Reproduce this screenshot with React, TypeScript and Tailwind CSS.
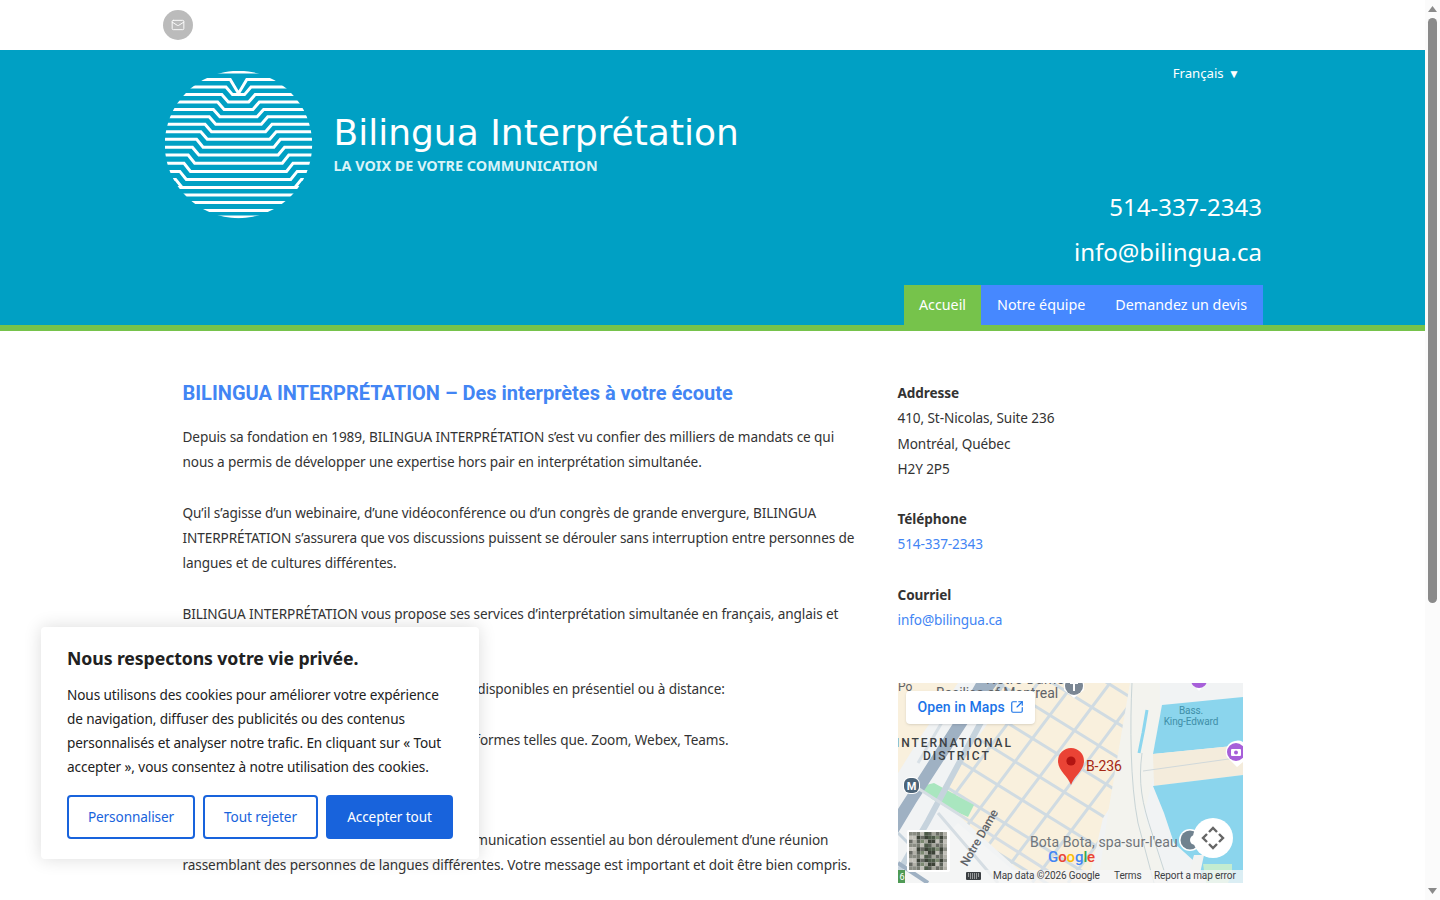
import { Mail, SquareArrowOutUpRight } from 'lucide-react';

// logo: stacked lines that step inward under a chevron
const levels = [72, 79.4, 87, 94.6, 102, 109.4, 116.8, 124.2, 131.7, 139.2, 147.2, 155, 163.2, 171.4, 179.4, 187.4, 195, 202.6, 210.4, 217];
const cx = 238.5;

function logoPath(k: number) {
  const y = levels[k];
  if (k === 0 || k > 14) return `M160 ${y}H320`;
  const off = 8.3 + (k - 1) * 4.2;
  if (k === 1) {
    return `M160 ${y}H${cx - off}L${cx} ${y + 14}L${cx + off} ${y}H320`;
  }
  const inner = off - 6.5;
  const y2 = levels[k + 1];
  return `M160 ${y}H${cx - off}L${cx - inner} ${y2}H${cx + inner}L${cx + off} ${y}H320`;
}

function Logo() {
  return (
    <svg width="148" height="148" viewBox="165 71 148 148" className="shrink-0">
      <clipPath id="logo-clip">
        <circle cx={cx} cy="144.5" r="73.7" />
      </clipPath>
      <g clipPath="url(#logo-clip)" fill="none" stroke="#fff" strokeWidth="3">
        {levels.map((_, k) => (
          <path key={k} d={logoPath(k)} />
        ))}
      </g>
    </svg>
  );
}

const roadsA = [-130, -96, -62, -28, 6, 40, 74, 108];
const roadsB = [100, 136, 172, 208, 244, 280, 316];
const thumbColors = ['#8b8d84', '#5c6158', '#a5a59b', '#c2c0b8', '#777a70', '#4d5a48', '#6a6c65', '#b2b1a8', '#3c4237', '#7d8a72'];
const thumbCells = Array.from({ length: 100 }, (_, i) => ({
  x: (i % 10) * 3.8,
  y: Math.floor(i / 10) * 3.8,
  fill: thumbColors[(i * i * 7 + i * 3 + Math.floor(i / 3)) % 10],
}));

function GoogleMap() {
  return (
    <div className="relative w-[345px] h-[200px] overflow-hidden bg-[#f1f3f4]">
      <svg width="345" height="200" viewBox="0 0 345 200" className="block">
        <clipPath id="tan-clip">
          <path d="M90 0H232V95L205 135L190 200H135L60 132L42 108L90 40Z" />
        </clipPath>
        <path d="M0 0H60L25 50L0 90Z" fill="#f9f0dd" />
        <path d="M90 0H232V95L205 135L190 200H135L60 132L42 108L90 40Z" fill="#f9f0dd" />
        <path d="M0 200L60 140L130 200Z" fill="#f4f5f5" />
        <g stroke="#d0dbe2" strokeWidth="3" fill="none" clipPath="url(#tan-clip)">
          {roadsA.map((c) => (
            <path key={c} d={`M0 ${c}L345 ${c + 214}`} />
          ))}
          {roadsB.map((d) => (
            <path key={d} d={`M${d + 40} 0L${d - 110} 200`} />
          ))}
        </g>
        <path d="M20 104L36 100L76 122L70 134L48 124L34 116Z" fill="#a9e6bf" />
        <path d="M78 0L54 42L0 126V150L18 120L70 40L100 0Z" fill="#9fb1c3" />
        <path d="M104 0L30 138L0 190" stroke="#c6d3dd" strokeWidth="6" fill="none" />
        <path d="M60 12L20 80" stroke="#d8e0e6" strokeWidth="3" fill="none" />
        <path d="M0 150L30 180" stroke="#c6d3dd" strokeWidth="3" fill="none" />
        <path d="M0 180L30 200" stroke="#9fb1c3" strokeWidth="4" fill="none" />
        <path d="M18 104L150 188M40 130L100 200" stroke="#d5dde3" strokeWidth="3" fill="none" />
        <path d="M232 0H262V70L246 130L270 200H200L210 130Z" fill="#f3f3ee" />
        <path d="M234 0C232 40 232 100 240 140L256 200M244 70C240 100 244 120 254 150L270 200" stroke="#c8d4d6" strokeWidth="1" fill="none" />
        <path d="M249 27L246 45L241 70L245 50Z" stroke="#8cd6ee" strokeWidth="3" fill="#8cd6ee" />
        <path d="M264 22L345 14V62L255 71Z" fill="#8bd5ed" />
        <path d="M255 71L345 62V92L256 103Z" fill="#f4ecdc" />
        <path d="M245 88L345 74" stroke="#d0d8da" strokeWidth="1" fill="none" />
        <path d="M255 103L345 92V200H310L296 178L276 160L266 130Z" fill="#8bd5ed" />
        <path d="M288 200L296 172L306 172L300 200Z" fill="#f2f3f1" />
        <path d="M305 181H334V190L330 200H308Z" fill="#c3ecd0" />
        <text x="88" y="1" fontFamily="Roboto" fontSize="14" letterSpacing="0.4" fill="#5f6368">Notre Dame</text>
        <text x="160" y="15" textAnchor="end" fontFamily="Roboto" fontSize="14" fill="#5f6368">Basilica of Montreal</text>
        <text x="0" y="8" fontFamily="Roboto" fontSize="12" fill="#5f6368">Po</text>
        <path d="M166 -8H186V7L176 15L166 7Z" fill="#fff" />
        <circle cx="176" cy="3" r="9" fill="#7b8794" />
        <path d="M176 0V8M172 0H180" stroke="#fff" strokeWidth="2" fill="none" />
        <path d="M292 -8H310V-2L301 8L292 -2Z" fill="#fff" />
        <circle cx="301" cy="-3" r="8" fill="#a75fd9" />
        <text x="115" y="64" textAnchor="end" fontFamily="Roboto" fontWeight="500" fontSize="12" letterSpacing="2" fill="#3c4043">INTERNATIONAL</text>
        <text x="25" y="77" fontFamily="Roboto" fontWeight="500" fontSize="12" letterSpacing="2" fill="#3c4043">DISTRICT</text>
        <text x="293" y="31" textAnchor="middle" fontFamily="Roboto" fontSize="10" fill="#3f8fa8">Bass.</text>
        <text x="293" y="42" textAnchor="middle" fontFamily="Roboto" fontSize="10" fill="#3f8fa8">King-Edward</text>
        <rect x="5" y="94" width="17" height="17" rx="7" fill="#fff" />
        <rect x="6" y="95" width="15" height="15" rx="6" fill="#4c6478" />
        <text x="13.5" y="106.5" textAnchor="middle" fontFamily="Roboto" fontWeight="700" fontSize="11" fill="#fff">M</text>
        <path d="M337 58a10 10 0 0 1 8 1V79L339 84L329 74A11 11 0 0 1 337 58Z" fill="#fff" />
        <circle cx="338" cy="69" r="9" fill="#a75fd9" />
        <rect x="333" y="66" width="10" height="7" rx="1" fill="#fff" />
        <circle cx="338" cy="69.5" r="2" fill="#a75fd9" />
        <circle cx="292" cy="157" r="11" fill="#fff" />
        <circle cx="292" cy="157" r="9.5" fill="#70828f" />
        <circle cx="297" cy="157" r="5" fill="#fff" />
        <text x="132" y="164" fontFamily="Roboto" fontSize="14" letterSpacing="0.08" fill="#70757a">Bota Bota, spa-sur-l'eau</text>
        <text x="0" y="0" fontFamily="Roboto" fontWeight="500" fontSize="12" fill="#5f6368" transform="translate(69 184) rotate(-60)">Notre Dame</text>
        <path d="M173 102C170 93 160 88 160 78A13 13 0 0 1 186 78C186 88 176 93 173 102Z" fill="#ea4335" />
        <circle cx="173" cy="78" r="4.6" fill="#b31412" />
        <text x="188" y="88" fontFamily="Roboto" fontSize="14" fill="#a52714">B-236</text>
        <text x="150" y="179" fontFamily="Roboto" fontSize="15" fontWeight="500">
          <tspan fill="#4285f4">G</tspan><tspan fill="#ea4335">o</tspan><tspan fill="#fbbc05">o</tspan><tspan fill="#4285f4">g</tspan><tspan fill="#34a853">l</tspan><tspan fill="#ea4335">e</tspan>
        </text>
        <rect x="62" y="187" width="283" height="13" fill="#f5f5f5" opacity="0.75" />
        <rect x="0" y="187" width="7" height="13" fill="#4f9a55" />
        <text x="1.5" y="197" fontFamily="Roboto" fontSize="9" fill="#fff">6</text>
        <rect x="68" y="189" width="15" height="8" rx="1" fill="#3c4043" />
        <path d="M70 191h11M70 193h11M72 195h7" stroke="#f5f5f5" strokeWidth="1" strokeDasharray="1 1" />
        <text x="95" y="196" fontFamily="Roboto" fontSize="10" fill="#3c4043">Map data ©2026 Google</text>
        <text x="216" y="196" fontFamily="Roboto" fontSize="10" fill="#3c4043">Terms</text>
        <text x="256" y="196" fontFamily="Roboto" fontSize="10" fill="#3c4043">Report a map error</text>
        <rect x="9" y="147" width="43" height="42" rx="2" fill="#fff" />
        <g transform="translate(11 149)">
          {thumbCells.map((c, i) => (
            <rect key={i} x={c.x} y={c.y} width="3.8" height="3.8" fill={c.fill} />
          ))}
        </g>
        <circle cx="315" cy="155" r="20" fill="#fff" />
        <path d="M311 149L315 145L319 149M311 161L315 165L319 161M309 151L305 155L309 159M321 151L325 155L321 159" stroke="#666" strokeWidth="2.4" fill="none" />
      </svg>
      <div className="absolute left-2 top-2 w-[129px] h-[33px] pb-[1px] bg-white rounded-sm shadow-sm flex items-center pl-3 gap-[5px] font-['Roboto',sans-serif] font-medium text-sm tracking-[0.1px] text-[#1a73e8]">
        Open in Maps
        <SquareArrowOutUpRight className="w-[14px] h-[14px]" strokeWidth={2} />
      </div>
    </div>
  );
}

function Scrollbar() {
  return (
    <div className="w-[15px] h-[900px] shrink-0 bg-[#fbfbfb] flex flex-col items-center">
      <div className="h-[18px] flex items-center justify-center">
        <svg width="9" height="6" viewBox="0 0 9 6"><path d="M4.5 0L9 6H0Z" fill="#8a8a8a" /></svg>
      </div>
      <div className="w-[9px] h-[585px] bg-[#8a8a8a] rounded-[5px]" />
      <div className="flex-1" />
      <div className="h-[18px] flex items-center justify-center">
        <svg width="9" height="6" viewBox="0 0 9 6"><path d="M0 0H9L4.5 6Z" fill="#8a8a8a" /></svg>
      </div>
    </div>
  );
}

function CookieBanner() {
  return (
    <div className="absolute left-[41px] top-[627px] w-[438px] h-[232px] bg-white rounded shadow-[0_0_18px_rgba(0,0,0,0.14)] px-[26px] pt-[19px] font-['Noto_Sans',sans-serif] text-[#212121]">
      <h2 className="text-[17.7px] font-bold leading-6 mb-[13px]">Nous respectons votre vie privée.</h2>
      <p className="text-[13.6px] tracking-[-0.1px] leading-6">
        Nous utilisons des cookies pour améliorer votre expérience de navigation, diffuser des publicités ou des contenus personnalisés et analyser notre trafic. En cliquant sur « Tout accepter », vous consentez à notre utilisation des cookies.
      </p>
      <div className="flex gap-2 mt-4 text-[13.6px] tracking-[-0.1px]">
        <button className="w-[128px] h-[44px] border-2 border-[#1863dc] rounded-sm text-[#1863dc]">Personnaliser</button>
        <button className="w-[115px] h-[44px] border-2 border-[#1863dc] rounded-sm text-[#1863dc]">Tout rejeter</button>
        <button className="w-[127px] h-[44px] bg-[#1863dc] rounded-sm text-white">Accepter tout</button>
      </div>
    </div>
  );
}

export default function App() {
  return (
    <div className="relative flex h-[900px] overflow-hidden bg-white font-['Noto_Sans',sans-serif] text-[13.6px] tracking-[-0.1px] text-[#333]">
      <div className="flex-1 min-w-0">
        <div className="h-[50px] pl-[163px] flex items-center">
          <div className="w-[30px] h-[30px] rounded-full bg-[#bbb] flex items-center justify-center">
            <Mail className="w-[14px] h-[14px] text-white" strokeWidth={1.6} />
          </div>
        </div>

        <header className="h-[281px] bg-[#00a0c4] border-b-[6px] border-[#76c34b] pl-[165px] flex text-white tracking-normal">
          <div className="flex items-start pt-[21px]">
            <Logo />
            <div className="ml-[20.5px] pt-[38px]">
              <div className="font-['DejaVu_Sans',sans-serif] text-[36px] leading-[48px]">Bilingua Interprétation</div>
              <div className="font-bold text-[14.4px] leading-5 text-[#d8f3f8] -mt-[1px]">LA VOIX DE VOTRE COMMUNICATION</div>
            </div>
          </div>
          <div className="ml-auto mr-[162px] flex flex-col items-end">
            <div className="mt-[14px] mr-[23px] text-[13.2px] leading-[18px]">Français <span className="ml-[1px] text-[12px]">▼</span></div>
            <div className="mt-[101px] mr-[1px] text-2xl leading-[45px]">514-337-2343</div>
            <div className="mr-[1px] text-2xl leading-[45px]">info@bilingua.ca</div>
            <nav className="flex mt-[11px] h-[40px] leading-[40px] text-[14.3px]">
              <a className="bg-[#76c34b] px-[15px]">Accueil</a>
              <a className="bg-[#4688ff] pl-[16px] pr-[15px]">Notre équipe</a>
              <a className="bg-[#4688ff] pl-[15px] pr-[16px]">Demandez un devis</a>
            </nav>
          </div>
        </header>

        <main className="flex pl-[182.5px] pt-[48px] leading-[25.2px]">
          <div className="w-[680px] shrink-0">
            <h1 className="font-['Roboto',sans-serif] font-bold text-xl tracking-normal text-[#4285f4] leading-[28px] mb-[17.15px]">BILINGUA INTERPRÉTATION – Des interprètes à votre écoute</h1>
            <p className="mb-[25.2px]">Depuis sa fondation en 1989, BILINGUA INTERPRÉTATION s’est vu confier des milliers de mandats ce qui nous a permis de développer une expertise hors pair en interprétation simultanée.</p>
            <p className="mb-[25.2px]">Qu’il s’agisse d’un webinaire, d’une vidéoconférence ou d’un congrès de grande envergure, BILINGUA INTERPRÉTATION s’assurera que vos discussions puissent se dérouler sans interruption entre personnes de langues et de cultures différentes.</p>
            <p className="mb-[25.2px]">BILINGUA INTERPRÉTATION vous propose ses services d’interprétation simultanée en français, anglais et espagnol.</p>
            <p className="mb-[25.2px]">Nos interprètes professionnels accrédités sont disponibles en présentiel ou à distance:</p>
            <p className="mb-[25.2px]">Service d’interprétation à distance sur les plateformes telles que. Zoom, Webex, Teams.</p>
            <p className="mb-[24.9px]">Pourquoi faire appel à un interprète?</p>
            <p>L’interprétation simultanée est un outil de communication essentiel au bon déroulement d’une réunion rassemblant des personnes de langues différentes. Votre message est important et doit être bien compris.</p>
          </div>
          <div className="ml-[35px] w-[345px] shrink-0 pt-[1.2px]">
            <div className="font-bold">Addresse</div>
            <div>410, St-Nicolas, Suite 236</div>
            <div>Montréal, Québec</div>
            <div>H2Y 2P5</div>
            <div className="font-bold mt-[25.2px]">Téléphone</div>
            <div className="text-[#4285f4]">514-337-2343</div>
            <div className="font-bold mt-[25.2px]">Courriel</div>
            <div className="text-[#4285f4]">info@bilingua.ca</div>
            <div className="mt-[50.8px]">
              <GoogleMap />
            </div>
          </div>
        </main>
      </div>
      <Scrollbar />
      <CookieBanner />
    </div>
  );
}
